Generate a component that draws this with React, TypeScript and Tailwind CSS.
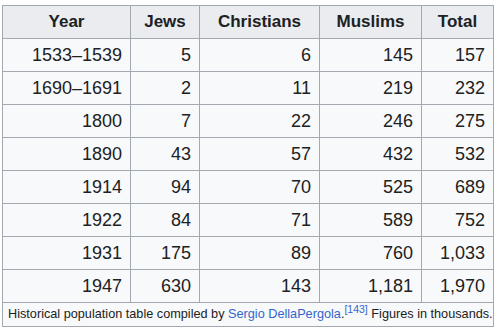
const rows: [string, string, string, string, string][] = [
  ['1533–1539', '5', '6', '145', '157'],
  ['1690–1691', '2', '11', '219', '232'],
  ['1800', '7', '22', '246', '275'],
  ['1890', '43', '57', '432', '532'],
  ['1914', '94', '70', '525', '689'],
  ['1922', '84', '71', '589', '752'],
  ['1931', '175', '89', '760', '1,033'],
  ['1947', '630', '143', '1,181', '1,970'],
];

const headers = ['Year', 'Jews', 'Christians', 'Muslims', 'Total'];

export default function App() {
  return (
    <div className="w-[497px] h-[332px] bg-white pt-[5px] pl-[2px] font-['Liberation_Sans',Arial,sans-serif] text-[#202122]">
      <table className="table-fixed border-collapse w-[491px] bg-[#f8f9fa]">
        <colgroup>
          <col className="w-[128px]" />
          <col className="w-[69px]" />
          <col className="w-[120px]" />
          <col className="w-[102px]" />
          <col className="w-[72px]" />
        </colgroup>
        <thead>
          <tr className="h-[33px]">
            {headers.map(h => (
              <th key={h} className="border border-[#a2a9b1] bg-[#eaecf0] text-[17px] font-bold text-center p-0">
                {h}
              </th>
            ))}
          </tr>
        </thead>
        <tbody>
          {rows.map(r => (
            <tr key={r[0]} className="h-[33px]">
              {r.map((c, i) => (
                <td key={i} className="border border-[#a2a9b1] text-[18px] text-right pr-[8px] py-0">
                  {c}
                </td>
              ))}
            </tr>
          ))}
          <tr className="h-[24px]">
            <td colSpan={5} className="border border-[#a2a9b1] text-[12.7px] text-left px-[5px] py-0 whitespace-nowrap overflow-hidden">
              Historical population table compiled by{' '}
              <span className="text-[#3366cc]">Sergio DellaPergola</span>.
              <sup className="text-[#3366cc] text-[10.5px]">[143]</sup> Figures in thousands.
            </td>
          </tr>
        </tbody>
      </table>
    </div>
  );
}
